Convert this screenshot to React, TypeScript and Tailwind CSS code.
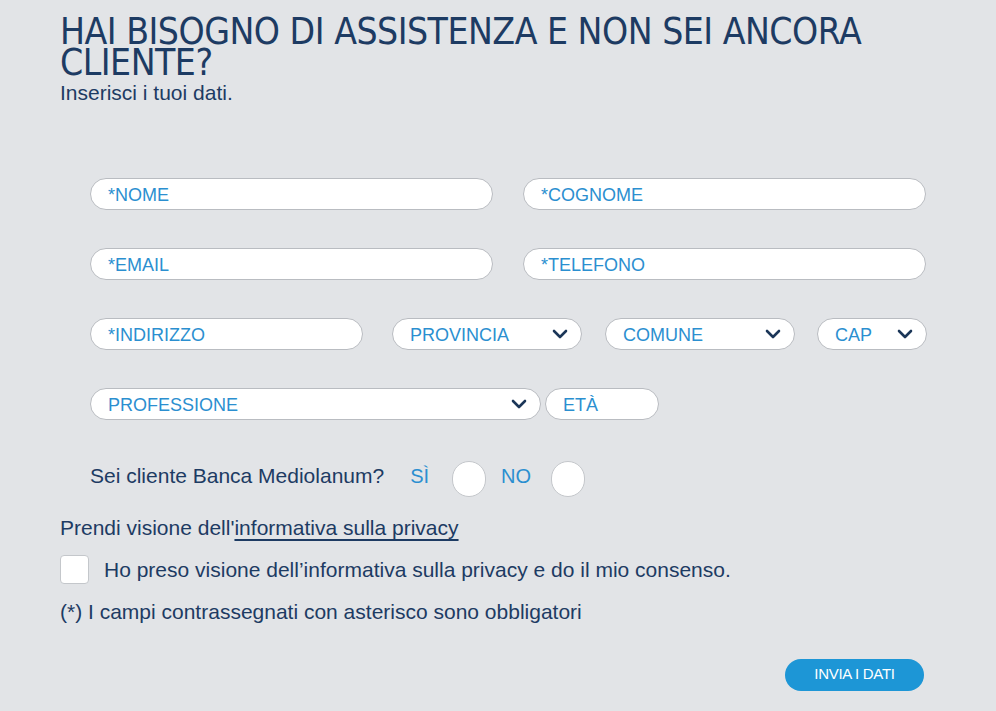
import React from "react";

const Chevron = () => (
  <svg width="16" height="10" viewBox="0 0 16 10" fill="none">
    <path d="M2 2l6 6 6-6" stroke="#1b3658" strokeWidth="2.6" strokeLinecap="round" strokeLinejoin="round" />
  </svg>
);

const Field = ({ label, w, select }: { label: string; w: string; select?: boolean }) => (
  <div className={`${w} h-[32px] bg-white border border-[#b9bcc1] rounded-full flex items-center justify-between pl-[17px] pr-[13px] shrink-0`}>
    <span className="text-[18px] text-[#2b8fd0] leading-none pt-[2px]">{label}</span>
    {select && <Chevron />}
  </div>
);

export default function App() {
  return (
    <div className="w-[996px] h-[711px] bg-[#e2e4e7] overflow-hidden text-[#1d3b63]" style={{ fontFamily: '"Liberation Sans", "Open Sans", sans-serif' }}>
      <div className="pl-[60px] pt-[16px]">
        <h1 className="text-[37px] leading-[31px] font-light tracking-[-0.5px] uppercase" style={{ fontFamily: '"Liberation Sans Narrow", "DejaVu Sans Condensed", sans-serif' }}>
          Hai bisogno di assistenza e non sei ancora<br />cliente?
        </h1>
        <p className="text-[21px] leading-[24px] mt-[3px] font-light">Inserisci i tuoi dati.</p>
      </div>

      <div className="pl-[90px] mt-[73px] flex flex-col gap-[38px]">
        <div className="flex gap-[30px]">
          <Field label="*NOME" w="w-[403px]" />
          <Field label="*COGNOME" w="w-[403px]" />
        </div>
        <div className="flex gap-[30px]">
          <Field label="*EMAIL" w="w-[403px]" />
          <Field label="*TELEFONO" w="w-[403px]" />
        </div>
        <div className="flex">
          <Field label="*INDIRIZZO" w="w-[273px]" />
          <div className="ml-[29px]"><Field label="PROVINCIA" w="w-[190px]" select /></div>
          <div className="ml-[23px]"><Field label="COMUNE" w="w-[190px]" select /></div>
          <div className="ml-[22px]"><Field label="CAP" w="w-[110px]" select /></div>
        </div>
        <div className="flex gap-[4px]">
          <Field label="PROFESSIONE" w="w-[451px]" select />
          <Field label="ETÀ" w="w-[114px]" />
        </div>
      </div>

      <div className="pl-[90px] mt-[38px] flex items-center h-[36px]">
        <span className="text-[21px]">Sei cliente Banca Mediolanum?</span>
        <span className="text-[20px] text-[#2b8fd0] ml-[26px]">SÌ</span>
        <div className="w-[34px] h-[36px] rounded-full bg-white border border-[#c4c7cb] ml-[23px] mt-[6px]" />
        <span className="text-[20px] text-[#2b8fd0] ml-[15px]">NO</span>
        <div className="w-[34px] h-[36px] rounded-full bg-white border border-[#c4c7cb] ml-[20px] mt-[6px]" />
      </div>

      <div className="pl-[60px] mt-[20px]">
        <p className="text-[21px] leading-[28px]">
          Prendi visione dell'<span className="underline underline-offset-[4px] decoration-[1.5px]">informativa sulla privacy</span>
        </p>
        <div className="flex items-center mt-[12px]">
          <div className="w-[29px] h-[29px] bg-white border border-[#c4c7cb] rounded-[4px]" />
          <span className="text-[21px] ml-[15px]">Ho preso visione dell’informativa sulla privacy e do il mio consenso.</span>
        </div>
        <p className="text-[21px] leading-[28px] mt-[12px]">(*) I campi contrassegnati con asterisco sono obbligatori</p>
      </div>

      <div className="flex justify-end pr-[72px] mt-[33px]">
        <button className="w-[139px] h-[32px] rounded-full bg-[#1d96d6] text-white text-[15px] tracking-[-0.3px]">INVIA I DATI</button>
      </div>
    </div>
  );
}
